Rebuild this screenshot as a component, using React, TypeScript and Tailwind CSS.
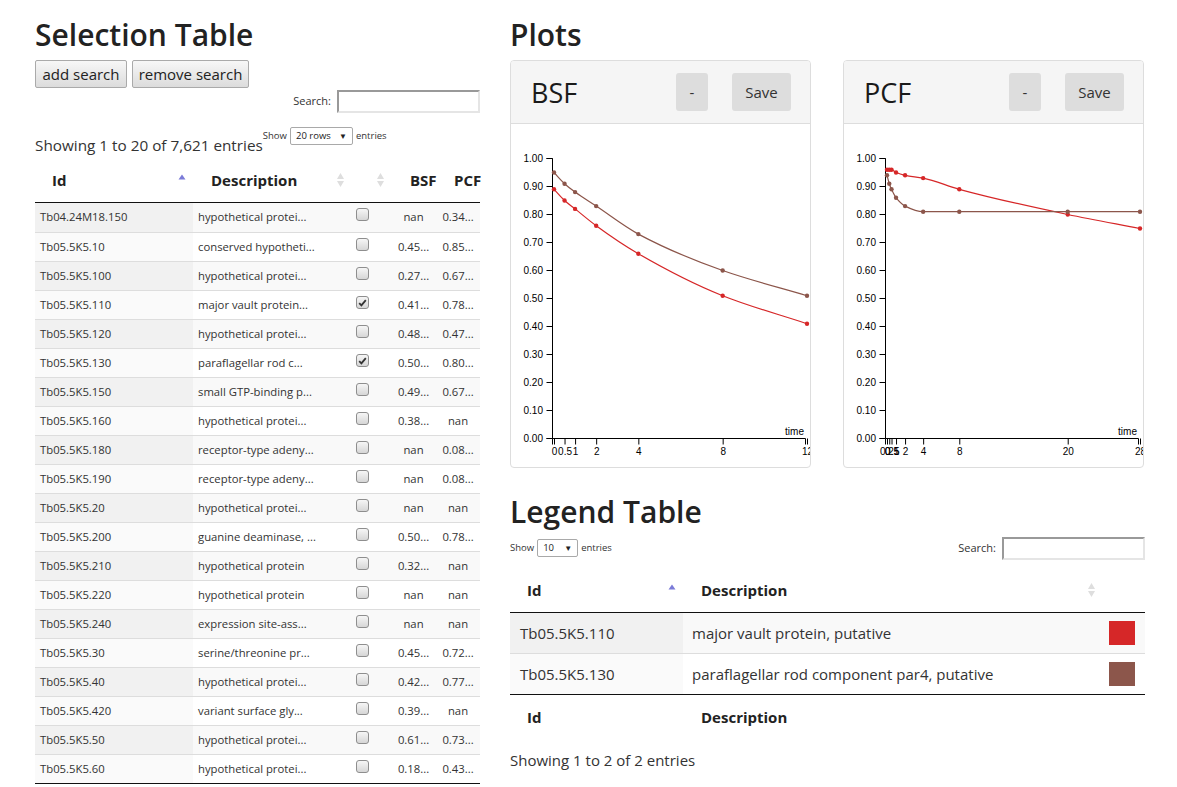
import React from "react";

const RED = "#d62728";
const BROWN = "#8c564b";

type Row = { id: string; desc: string; checked?: boolean; bsf: string; pcf: string };

const rows: Row[] = [
  { id: "Tb04.24M18.150", desc: "hypothetical protei...", bsf: "nan", pcf: "0.34..." },
  { id: "Tb05.5K5.10", desc: "conserved hypotheti...", bsf: "0.45...", pcf: "0.85..." },
  { id: "Tb05.5K5.100", desc: "hypothetical protei...", bsf: "0.27...", pcf: "0.67..." },
  { id: "Tb05.5K5.110", desc: "major vault protein...", checked: true, bsf: "0.41...", pcf: "0.78..." },
  { id: "Tb05.5K5.120", desc: "hypothetical protei...", bsf: "0.48...", pcf: "0.47..." },
  { id: "Tb05.5K5.130", desc: "paraflagellar rod c...", checked: true, bsf: "0.50...", pcf: "0.80..." },
  { id: "Tb05.5K5.150", desc: "small GTP-binding p...", bsf: "0.49...", pcf: "0.67..." },
  { id: "Tb05.5K5.160", desc: "hypothetical protei...", bsf: "0.38...", pcf: "nan" },
  { id: "Tb05.5K5.180", desc: "receptor-type adeny...", bsf: "nan", pcf: "0.08..." },
  { id: "Tb05.5K5.190", desc: "receptor-type adeny...", bsf: "nan", pcf: "0.08..." },
  { id: "Tb05.5K5.20", desc: "hypothetical protei...", bsf: "nan", pcf: "nan" },
  { id: "Tb05.5K5.200", desc: "guanine deaminase, ...", bsf: "0.50...", pcf: "0.78..." },
  { id: "Tb05.5K5.210", desc: "hypothetical protein", bsf: "0.32...", pcf: "nan" },
  { id: "Tb05.5K5.220", desc: "hypothetical protein", bsf: "nan", pcf: "nan" },
  { id: "Tb05.5K5.240", desc: "expression site-ass...", bsf: "nan", pcf: "nan" },
  { id: "Tb05.5K5.30", desc: "serine/threonine pr...", bsf: "0.45...", pcf: "0.72..." },
  { id: "Tb05.5K5.40", desc: "hypothetical protei...", bsf: "0.42...", pcf: "0.77..." },
  { id: "Tb05.5K5.420", desc: "variant surface gly...", bsf: "0.39...", pcf: "nan" },
  { id: "Tb05.5K5.50", desc: "hypothetical protei...", bsf: "0.61...", pcf: "0.73..." },
  { id: "Tb05.5K5.60", desc: "hypothetical protei...", bsf: "0.18...", pcf: "0.43..." },
];

type Series = { color: string; pts: [number, number][] };

const bsfSeries: Series[] = [
  { color: BROWN, pts: [[0, 0.95], [0.5, 0.91], [1, 0.88], [2, 0.83], [4, 0.73], [8, 0.6], [12, 0.51]] },
  { color: RED, pts: [[0, 0.89], [0.5, 0.85], [1, 0.82], [2, 0.76], [4, 0.66], [8, 0.51], [12, 0.41]] },
];

const pcfSeries: Series[] = [
  { color: RED, pts: [[0, 0.96], [0.25, 0.96], [0.5, 0.96], [1, 0.95], [2, 0.94], [4, 0.93], [8, 0.89], [20, 0.8], [28, 0.75]] },
  { color: BROWN, pts: [[0, 0.94], [0.25, 0.91], [0.5, 0.89], [1, 0.86], [2, 0.83], [4, 0.81], [8, 0.81], [20, 0.81], [28, 0.81]] },
];

// monotone cubic, same idea as d3.curveMonotoneX
function monotone(p: [number, number][]) {
  const n = p.length;
  const dx: number[] = [];
  const s: number[] = [];
  for (let i = 0; i < n - 1; i++) {
    dx.push(p[i + 1][0] - p[i][0]);
    s.push((p[i + 1][1] - p[i][1]) / dx[i]);
  }
  const m: number[] = new Array(n).fill(0);
  m[0] = s[0];
  m[n - 1] = s[n - 2];
  for (let i = 1; i < n - 1; i++) {
    if (s[i - 1] * s[i] <= 0) m[i] = 0;
    else {
      const h0 = dx[i - 1];
      const h1 = dx[i];
      m[i] = (3 * (h0 + h1)) / ((2 * h1 + h0) / s[i - 1] + (h1 + 2 * h0) / s[i]);
    }
  }
  let d = `M${p[0][0]},${p[0][1]}`;
  for (let i = 0; i < n - 1; i++) {
    const h = dx[i] / 3;
    d += `C${p[i][0] + h},${p[i][1] + m[i] * h} ${p[i + 1][0] - h},${p[i + 1][1] - m[i + 1] * h} ${p[i + 1][0]},${p[i + 1][1]}`;
  }
  return d;
}

function Chart({ max, ticks, series }: { max: number; ticks: number[]; series: Series[] }) {
  const ax = 41.5;
  const x0 = 43;
  const x1 = 296;
  const yTop = 34.5;
  const yBot = 314.5;
  const sx = (t: number) => x0 + (t / max) * (x1 - x0);
  const sy = (v: number) => yBot - v * (yBot - yTop);
  const yt = Array.from({ length: 11 }, (_, i) => i / 10);
  return (
    <svg width={299} height={343} className="block" fontFamily="'Liberation Sans', Arial, sans-serif" fontSize={10}>
      {/* y axis */}
      <path d={`M${ax - 6},${yTop}H${ax}V${yBot}H${ax - 6}`} fill="none" stroke="#000" />
      {yt.map((v) => (
        <g key={v}>
          <line x1={ax - 6} x2={ax} y1={sy(v)} y2={sy(v)} stroke="#000" />
          <text x={ax - 9.5} y={sy(v)} dy="0.32em" textAnchor="end" fill="#000">
            {v.toFixed(2)}
          </text>
        </g>
      ))}
      {/* x axis */}
      <path d={`M${ax},${yBot + 6}V${yBot}H${x1 - 1.5}V${yBot + 6}`} fill="none" stroke="#000" />
      {ticks.map((t) => (
        <g key={t}>
          <line x1={sx(t) + 0.5} x2={sx(t) + 0.5} y1={yBot} y2={yBot + 6} stroke="#000" />
          <text x={sx(t) + 0.5} y={yBot + 9} dy="0.71em" textAnchor="middle" fill="#000">
            {t}
          </text>
        </g>
      ))}
      <text x={293} y={311} textAnchor="end" fill="#000">
        time
      </text>
      {series.map((s) => {
        const pts = s.pts.map(([t, v]) => [sx(t), sy(v)] as [number, number]);
        return (
          <g key={s.color}>
            <path d={monotone(pts)} fill="none" stroke={s.color} strokeWidth={1.2} />
            {pts.map(([x, y], i) => (
              <circle key={i} cx={x} cy={y} r={2.2} fill={s.color} />
            ))}
          </g>
        );
      })}
    </svg>
  );
}

function PlotPanel({ title, max, ticks, series }: { title: string; max: number; ticks: number[]; series: Series[] }) {
  return (
    <div className="w-[301px] h-[408px] border border-[#ddd] rounded-[4px] overflow-hidden bg-white">
      <div className="h-[63px] bg-[#f5f5f5] border-b border-[#ddd] flex items-center pl-[20px] pr-[19px]">
        <span className="flex-1 text-[27px] font-medium text-[#1a1a1a] leading-none">{title}</span>
        <button className="w-[32px] h-[38px] rounded-[3px] bg-[#ddd] text-[15px] text-[#333]">-</button>
        <button className="ml-[24px] w-[59px] h-[38px] rounded-[3px] bg-[#ddd] text-[15px] text-[#333]">Save</button>
      </div>
      <Chart max={max} ticks={ticks} series={series} />
    </div>
  );
}

function SortAsc() {
  return (
    <svg width="8" height="6" viewBox="0 0 8 6">
      <path d="M4 0.5 7.5 5.5H0.5Z" fill="#7b7bd8" />
    </svg>
  );
}

function SortBoth() {
  return (
    <svg width="9" height="16" viewBox="0 0 9 16">
      <path d="M4.5 1 8 7H1Z" fill="#dedede" />
      <path d="M4.5 15 8 9H1Z" fill="#dedede" />
    </svg>
  );
}

function Check({ on }: { on?: boolean }) {
  return (
    <span className="w-[13px] h-[13px] rounded-[3px] border border-[#8e8e8e] bg-gradient-to-b from-[#f6f6f6] to-[#d6d6d6] flex items-center justify-center">
      {on && (
        <svg width="9" height="8" viewBox="0 0 9 8">
          <path d="M1.2 4.2 3.4 6.4 7.8 1.2" fill="none" stroke="#333" strokeWidth="1.8" />
        </svg>
      )}
    </span>
  );
}

function SearchBox({ w }: { w: string }) {
  return (
    <div
      className={`${w} h-[23px] border-2 border-t-[#999] border-l-[#999] border-r-[#e5e5e5] border-b-[#e5e5e5] bg-white`}
    />
  );
}

function LengthSelect({ label, w }: { label: string; w: string }) {
  return (
    <div className={`${w} h-[18px] border border-[#a9a9a9] rounded-[2px] bg-white flex items-center justify-between pl-[5px] pr-[5px] text-[9.5px] text-[#222]`}>
      <span>{label}</span>
      <span className="text-[8px]">▼</span>
    </div>
  );
}

export default function App() {
  return (
    <div className="min-h-[787px] bg-white text-[#333] font-['Open_Sans',sans-serif] pl-[35px] flex gap-[30px]">
      {/* Selection Table */}
      <div className="w-[445px] shrink-0">
        <h1 className="pt-[15px] h-[55px] text-[30px] leading-[40px] font-semibold text-[#222]">Selection Table</h1>
        <div className="flex gap-[5px] mt-[5px]">
          <button className="w-[92px] h-[28px] border border-[#aaa] rounded-[2px] bg-gradient-to-b from-[#f7f7f7] to-[#dcdcdc] text-[15px] text-[#222]">
            add search
          </button>
          <button className="w-[117px] h-[28px] border border-[#aaa] rounded-[2px] bg-gradient-to-b from-[#f7f7f7] to-[#dcdcdc] text-[15px] text-[#222]">
            remove search
          </button>
        </div>
        <div className="flex justify-end items-center gap-[6px] mt-[2px]">
          <span className="text-[11px] text-[#333]">Search:</span>
          <SearchBox w="w-[143px]" />
        </div>
        <div className="flex h-[33px] mt-[14px]">
          <span className="self-end text-[15.3px] leading-[22px] mb-[4px] text-[#333]">Showing 1 to 20 of 7,621 entries</span>
          <div className="self-start flex items-center gap-[3px] text-[9.5px] text-[#333]">
            <span>Show</span>
            <LengthSelect label="20 rows" w="w-[63px]" />
            <span>entries</span>
          </div>
        </div>

        {/* header */}
        <div className="flex h-[43px] pb-[2px] border-b border-[#111] text-[15px] font-bold text-[#222]">
          <div className="w-[158px] flex items-center justify-between pl-[17px] pr-[7px]">
            <span>Id</span>
            <span className="-mt-[7px]"><SortAsc /></span>
          </div>
          <div className="w-[152px] flex items-center justify-between pl-[18px]">
            <span>Description</span>
            <SortBoth />
          </div>
          <div className="w-[40px] flex items-center justify-end">
            <SortBoth />
          </div>
          <div className="w-[57px] flex items-center pl-[25px]">BSF</div>
          <div className="w-[38px] flex items-center pl-[12px] whitespace-nowrap">PCF</div>
        </div>

        {/* rows */}
        <div className="border-b border-[#111]">
          {rows.map((r, i) => {
            const odd = i % 2 === 0;
            return (
              <div
                key={r.id + i}
                className={`flex h-[29px] text-[11.3px] text-[#333] ${i > 0 ? "border-t border-[#ddd]" : ""} ${odd ? "bg-[#f9f9f9]" : "bg-white"}`}
              >
                <div className={`w-[158px] flex items-center pl-[5px] ${odd ? "bg-[#f1f1f1]" : "bg-[#fafafa]"}`}>{r.id}</div>
                <div className="w-[152px] flex items-center pl-[5px] whitespace-nowrap">{r.desc}</div>
                <div className="w-[40px] flex items-start pt-[5px] pl-[11px]">
                  <Check on={r.checked} />
                </div>
                <div className="w-[57px] flex items-center justify-center">{r.bsf}</div>
                <div className="w-[38px] flex items-center justify-center pr-[6px] whitespace-nowrap">{r.pcf}</div>
              </div>
            );
          })}
        </div>
      </div>

      {/* Plots + Legend */}
      <div className="w-[635px] shrink-0">
        <h1 className="pt-[15px] h-[55px] text-[30px] leading-[40px] font-semibold text-[#222]">Plots</h1>
        <div className="flex gap-[32px] mt-[5px]">
          <PlotPanel title="BSF" max={12} ticks={[0, 0.5, 1, 2, 4, 8, 12]} series={bsfSeries} />
          <PlotPanel title="PCF" max={28} ticks={[0, 0.25, 0.5, 1, 2, 4, 8, 20, 28]} series={pcfSeries} />
        </div>

        <h1 className="mt-[24px] h-[40px] text-[30px] leading-[40px] font-semibold text-[#222]">Legend Table</h1>
        <div className="flex items-center justify-between mt-[5px] h-[22px]">
          <div className="flex items-center gap-[3px] text-[9.5px] text-[#333]">
            <span>Show</span>
            <LengthSelect label="10" w="w-[41px]" />
            <span>entries</span>
          </div>
          <div className="flex items-center gap-[6px]">
            <span className="text-[11px] text-[#333]">Search:</span>
            <SearchBox w="w-[143px]" />
          </div>
        </div>

        <div className="mt-[11px]">
          <div className="flex h-[43px] pb-[2px] border-b border-[#111] text-[15px] font-bold text-[#222]">
            <div className="w-[173px] flex items-center justify-between pl-[17px] pr-[7px]">
              <span>Id</span>
              <span className="-mt-[7px]"><SortAsc /></span>
            </div>
            <div className="w-[414px] flex items-center justify-between pl-[18px] pr-[1px]">
              <span>Description</span>
              <SortBoth />
            </div>
            <div className="w-[48px]" />
          </div>
          {[
            { id: "Tb05.5K5.110", desc: "major vault protein, putative", color: "bg-[#d62728]" },
            { id: "Tb05.5K5.130", desc: "paraflagellar rod component par4, putative", color: "bg-[#8c564b]" },
          ].map((r, i) => {
            const odd = i === 0;
            return (
              <div
                key={r.id}
                className={`flex text-[15px] text-[#333] ${odd ? "h-[40px] bg-[#f9f9f9]" : "h-[41px] border-t border-[#ddd] bg-white"}`}
              >
                <div className={`w-[173px] flex items-center pl-[10px] ${odd ? "bg-[#f1f1f1]" : "bg-[#fafafa]"}`}>{r.id}</div>
                <div className="w-[414px] flex items-center pl-[9px]">{r.desc}</div>
                <div className="w-[48px] flex items-center pl-[12px]">
                  <span className={`block w-[26px] h-[24px] ${r.color}`} />
                </div>
              </div>
            );
          })}
          <div className="flex h-[46px] border-t border-[#111] text-[15px] font-bold text-[#222]">
            <div className="w-[173px] flex items-center pl-[17px]">Id</div>
            <div className="w-[414px] flex items-center pl-[18px]">Description</div>
          </div>
        </div>
        <div className="mt-[9px] text-[15px] leading-[22px] text-[#333]">Showing 1 to 2 of 2 entries</div>
      </div>
    </div>
  );
}
